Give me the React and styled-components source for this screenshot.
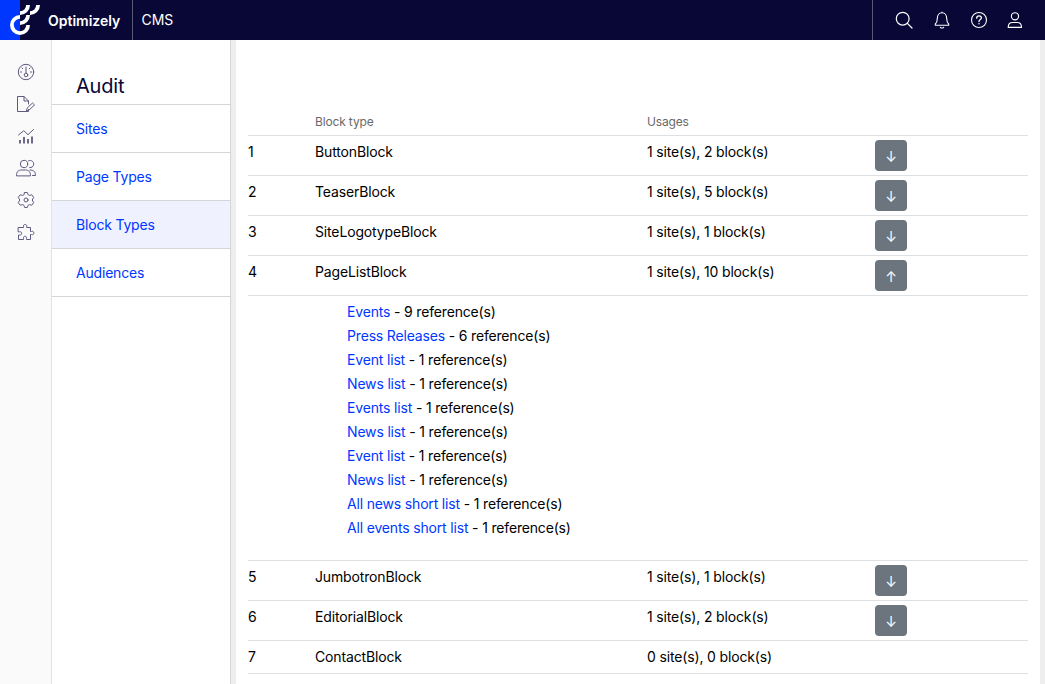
import React from "react";
import styled, { createGlobalStyle } from "styled-components";

const GlobalStyle = createGlobalStyle`
  * { box-sizing: border-box; }
  body {
    margin: 0;
    background: #fff;
    color: #000;
    font: 14px/24px Inter, "Liberation Sans", sans-serif;
    overflow: hidden;
  }
`;

const Page = styled.div`
  height: 100vh;
  display: flex;
  flex-direction: column;
`;

const TopBar = styled.header`
  height: 40px;
  flex: none;
  display: flex;
  background: #080736;
  color: #fff;
`;

const Brand = styled.div`
  width: 133px;
  display: flex;
  align-items: center;
  border-right: 1px solid #5a5977;
  font-weight: 600;
  font-size: 14px;
  padding-top: 1px;
`;

const LogoMark = styled.svg`
  display: block;
  width: 48px;
  height: 40px;
  margin-top: -1px;
`;

const Product = styled.div`
  flex: 1;
  padding-left: 8.5px;
  line-height: 40px;
  letter-spacing: -0.1px;
`;

const Actions = styled.div`
  width: 173px;
  display: flex;
  align-items: center;
  border-left: 1px solid #5a5977;
  padding-left: 19px;
`;

const Icon = styled.svg`
  display: block;
  flex: none;
  width: 24px;
  height: 24px;
  fill: none;
  stroke: currentColor;
  stroke-width: ${(p) => p.$weight || 1.1};
  stroke-linecap: round;
  stroke-linejoin: round;
  margin-right: ${(p) => p.$gap || 0}px;
`;

const Body = styled.div`
  flex: 1;
  min-height: 0;
  display: flex;
`;

const Rail = styled.nav`
  width: 52px;
  display: flex;
  flex-direction: column;
  align-items: center;
  gap: 8px;
  padding-top: 20px;
  background: #fafafa;
  border-right: 1px solid #e3e3e3;
  color: #5d5a80;
`;

const SideMenu = styled.nav`
  width: 179px;
  border-right: 1px solid #d6d6d6;
  letter-spacing: -0.19px;
`;

const MenuTitle = styled.h1`
  margin: 0;
  height: 65px;
  padding: 34px 24px 0;
  border-bottom: 1px solid #d6d6d6;
  font-size: 20px;
  font-weight: 400;
  color: #080736;
`;

const MenuItem = styled.a`
  display: block;
  height: 48px;
  padding-left: 24px;
  line-height: 48px;
  border-bottom: 1px solid #d6d6d6;
  color: #0037ff;
  background: ${(p) => (p.$active ? "#eff1ff" : "transparent")};
`;

const Main = styled.main`
  flex: 1;
  padding: 69px 12px 0;
  border-left: 5px solid #eee;
  border-right: 5px solid #eee;
  letter-spacing: -0.15px;
`;

const Row = styled.div`
  display: grid;
  grid-template-columns: 67px 332px 228px 1fr;
  align-items: start;
  padding: 4px 0;
  border-bottom: 1px solid #dee0e3;
`;

const HeadRow = styled(Row)`
  height: 27px;
  padding: 1px 0;
  font-size: 12px;
  color: #696969;
`;

const Toggle = styled.button`
  width: 32px;
  height: 31px;
  padding: 3px 0 0;
  border: 0;
  border-radius: 4px;
  background: #6c757d;
  color: #fff;
  font: 14px/24px Inter, "Liberation Sans", sans-serif;
`;

const References = styled.ul`
  list-style: none;
  margin: 0;
  padding: 4px 0 20px 99px;
  border-bottom: 1px solid #dee0e3;
  letter-spacing: -0.17px;
`;

const Link = styled.a`
  color: #0037ff;
`;

const actionIcons = [
  <Icon key="search" viewBox="0 0 24 24" $weight="1.2" $gap={14}>
    <circle cx="10.7" cy="10.7" r="6.4" />
    <path d="M15.4 15.4 20 20" />
  </Icon>,
  <Icon key="bell" viewBox="0 0 24 24" $gap={13}>
    <path d="M5.3 17.3V16c1.6-1.3 2-2.5 2-5.5 0-3 1.6-5.8 4.7-5.8s4.7 2.8 4.7 5.8c0 3 .4 4.2 2 5.5v1.3zM10.3 19.3c.8.7 2.6.7 3.4 0M12 4.7V4" />
  </Icon>,
  <Icon key="help" viewBox="0 0 24 24" $gap={12}>
    <circle cx="12" cy="12" r="7.5" />
    <path d="M9.7 10.2c0-3 4.7-3 4.7-.3 0 1.7-2.4 1.6-2.4 3.5M12 15.5v.3" strokeWidth="1.3" />
  </Icon>,
  <Icon key="user" viewBox="0 0 24 24">
    <circle cx="12" cy="8.3" r="3.6" />
    <path d="M5.2 19.4c0-3.4 1.8-4.9 4.3-4.9h4.700c2.700 0 4.300 1.700 4.300 4.900z" />
  </Icon>,
];

const railIcons = [
  <Icon key="gauge" viewBox="0 0 24 24" $weight="1">
    <circle cx="12" cy="12" r="7.7" />
    <circle cx="12" cy="15" r="1.8" />
    <path d="M12 13V7M6.500 12h1M16.500 12h1M8 8l.7.7M16 8l-.7.7" />
  </Icon>,
  <Icon key="page" viewBox="0 0 24 24" $weight="1">
    <path d="M14.500 17.500v2h-11v-15H10l4.500 4.500v3M10 4.500V9h4.500M12.500 18.800l.7-2.800 5.300-5 2 1.900-5.300 5z" />
  </Icon>,
  <Icon key="chart" viewBox="0 0 24 24" $weight="1">
    <path d="m4.500 11 5.300-4.300 4.200 4L19.500 5.500" />
    <path d="M6 16v3.500M10 13v6.500M14 15v4.500M18 12.500v7" strokeWidth="1.800" strokeLinecap="butt" />
  </Icon>,
  <Icon key="users" viewBox="0 0 24 24" $weight="1">
    <circle cx="10" cy="8" r="3.7" />
    <path d="M2.500 19.500c0-4 2-5.500 5-5.500h4c3.200 0 5 1.700 5 5.500zM14.500 4.800c3-1.200 5.200.9 5.200 3.200 0 2.500-2 4-4 3.500M16 14c3.800 0 5.500 1.800 5.500 5.500h-3" />
  </Icon>,
  <Icon key="gear" viewBox="0 0 24 24" $weight="1">
    <circle cx="12" cy="12" r="2" />
    <path d="M10.700 4.500h2.600l.8 2.200 1.200.7 2.500-.6 1.900 2.500L18.200 12l1.500 2.700-1.900 2.500-2.500-.6-1.200.7-.8 2.200h-2.600l-.8-2.200-1.200-.7-2.500.6-1.900-2.500L5.800 12 4.300 9.300l1.900-2.500 2.500.6 1.200-.7z" />
  </Icon>,
  <Icon key="puzzle" viewBox="0 0 24 24" $weight="1">
    <path d="M4.500 7.500h5V6.700c-1-2.900 4.200-2.900 3.200 0v.8h3.800v4h1c3.100-1.200 3.100 4.200 0 3h-1v5h-4v-1.200c.8-2.700-3.800-2.700-3 0v1.200h-5v-4.500h1c2.900.8 2.900-4 0-3.200h-1z" />
  </Icon>,
];

const menu = ["Sites", "Page Types", "Block Types", "Audiences"];

const blocks = [
  { name: "ButtonBlock", sites: 1, count: 2 },
  { name: "TeaserBlock", sites: 1, count: 5 },
  { name: "SiteLogotypeBlock", sites: 1, count: 1 },
  {
    name: "PageListBlock",
    sites: 1,
    count: 10,
    references: [
      ["Events", 9],
      ["Press Releases", 6],
      ["Event list", 1],
      ["News list", 1],
      ["Events list", 1],
      ["News list", 1],
      ["Event list", 1],
      ["News list", 1],
      ["All news short list", 1],
      ["All events short list", 1],
    ],
  },
  { name: "JumbotronBlock", sites: 1, count: 1 },
  { name: "EditorialBlock", sites: 1, count: 2 },
  { name: "ContactBlock", sites: 0, count: 0 },
];

function Logo() {
  return (
    <LogoMark viewBox="0 0 48 40">
      <path fill="#0037ff" d="M0 0h20v40H0z" />
      <path
        fill="none"
        stroke="#fff"
        strokeWidth="3.8"
        d="M20 16.900A8.100 8.100 0 1 0 28.100 25M20 23.100A8.100 8.100 0 0 0 28.100 15M20 13.100A8.100 8.100 0 0 0 28.100 5M30 13.100A8.100 8.100 0 0 0 38.100 5"
      />
    </LogoMark>
  );
}

export default function App() {
  return (
    <Page>
      <GlobalStyle />
      <TopBar>
        <Brand>
          <Logo />
          Optimizely
        </Brand>
        <Product>CMS</Product>
        <Actions>{actionIcons}</Actions>
      </TopBar>
      <Body>
        <Rail>{railIcons}</Rail>
        <SideMenu>
          <MenuTitle>Audit</MenuTitle>
          {menu.map((label) => (
            <MenuItem key={label} $active={label === "Block Types"}>
              {label}
            </MenuItem>
          ))}
        </SideMenu>
        <Main>
          <HeadRow>
            <span />
            <span>Block type</span>
            <span>Usages</span>
          </HeadRow>
          {blocks.map((block, i) => (
            <React.Fragment key={block.name}>
              <Row>
                <span>{i + 1}</span>
                <span>{block.name}</span>
                <span>{`${block.sites} site(s), ${block.count} block(s)`}</span>
                {block.count > 0 && <Toggle>{block.references ? "↑" : "↓"}</Toggle>}
              </Row>
              {block.references && (
                <References>
                  {block.references.map(([name, n], k) => (
                    <li key={k}>
                      <Link>{name}</Link>
                      {` - ${n} reference(s)`}
                    </li>
                  ))}
                </References>
              )}
            </React.Fragment>
          ))}
        </Main>
      </Body>
    </Page>
  );
}
